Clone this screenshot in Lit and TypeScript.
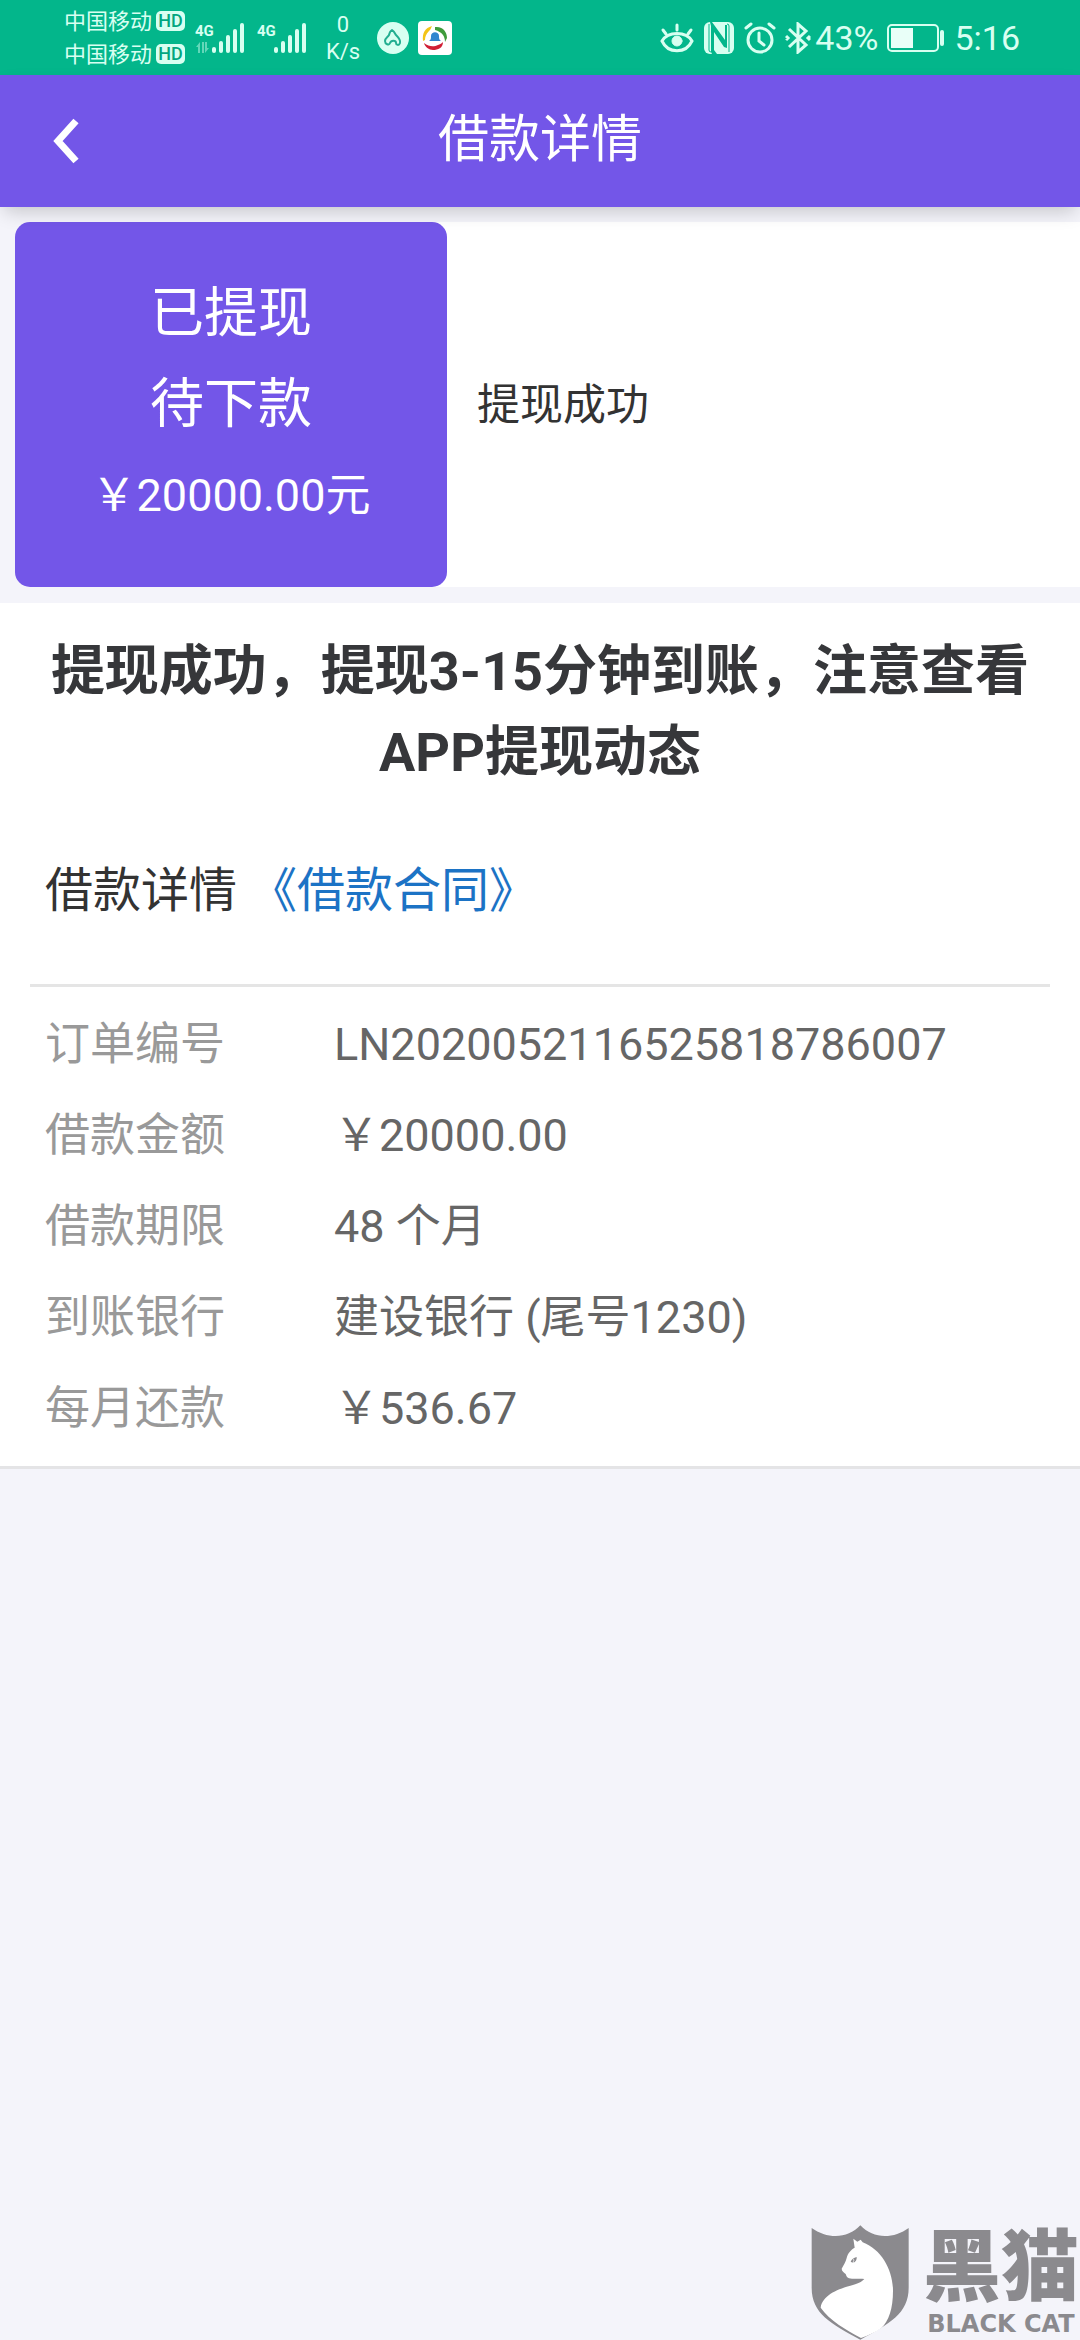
import { LitElement, html, css, svg } from "lit";
import { customElement, property } from "lit/decorators.js";

const FONT = css`Roboto, "Noto Sans CJK SC", sans-serif`;

@customElement("signal-meter")
class SignalMeter extends LitElement {
  @property({ type: Boolean }) traffic = false;

  static styles = css`
    :host { display: block; }
    .meter { display: block; width: 52px; height: 32px; fill: #d8fff1; }
    .net { font: 700 15px ${FONT}; }
    .faint { opacity: 0.45; }
  `;

  render() {
    return html`
      <svg class="meter" viewBox="0 0 52 32" role="img" aria-label="4G 信号">
        <text class="net" x="0" y="14">4G</text>
        ${this.traffic
          ? svg`<g class="faint"><path d="M5 20v11H3v-6H1zM7 20h2v11H7zM10 20h2v6h2l-4 5z"/></g>`
          : ""}
        <rect x="17" y="25" width="4" height="6" rx="2" />
        <rect x="24" y="19" width="4" height="12" rx="2" />
        <rect x="31" y="13" width="4" height="18" rx="2" />
        <rect x="38" y="7" width="4" height="24" rx="2" />
        <rect x="45" y="1" width="4" height="30" rx="2" />
      </svg>
    `;
  }
}

@customElement("status-bar")
class StatusBar extends LitElement {
  static styles = css`
    :host {
      display: flex;
      align-items: center;
      justify-content: space-between;
      height: 75px;
      padding: 0 60px 0 64px;
      background: #03b68b;
      color: #d8fff1;
      font-family: ${FONT};
    }
    .group { display: flex; align-items: center; }
    .left { gap: 10px; }
    .right { gap: 9px; }
    .carriers { display: grid; }
    .carrier { display: flex; align-items: center; gap: 4px; font-size: 22px; line-height: 33px; }
    .hd {
      width: 29px;
      border-radius: 5px;
      background: #d8fff1;
      color: #03a67f;
      font-size: 18px;
      font-weight: 500;
      line-height: 20px;
      text-align: center;
    }
    .speed { width: 48px; font-size: 22px; line-height: 27px; text-align: center; }
    .apps { display: flex; align-items: center; gap: 8px; }
    .big { font-size: 34px; line-height: 40px; }
    .bt { display: flex; align-items: center; gap: 4px; }
    svg { display: block; }
  `;

  render() {
    const carrier = html`<div class="carrier"><span>中国移动</span><span class="hd">HD</span></div>`;
    return html`
      <div class="group left">
        <div class="carriers">${carrier}${carrier}</div>
        <signal-meter traffic></signal-meter>
        <signal-meter></signal-meter>
        <div class="speed"><div>0</div><div>K/s</div></div>
        <div class="apps">
          <svg width="33" height="33" viewBox="0 0 33 33" aria-hidden="true">
            <circle cx="16" cy="17" r="16" fill="#d8fff1" />
            <path d="M15 9c3 2 3 4 4 5 2 2 5 5 4 8-1 3-4 2-4 0 0-3-5-3-6 0-1 3-5 1-5-2s3-4 4-6 0-3 3-5z"
              fill="none" stroke="#22ae90" stroke-width="2" stroke-linejoin="round" />
          </svg>
          <svg width="34" height="34" viewBox="0 0 34 34" aria-hidden="true">
            <rect width="34" height="34" rx="4" fill="#fff" />
            <path d="M5 20C4 12 7 7 14 5c-1 2-1 3-3 5-3 3-4 6-4 9z" fill="#f3c416" />
            <path d="M17 6c8-1 12 5 12 11l-2 4c0-6-3-10-10-12z" fill="#3f9b3b" />
            <path d="M6 22c5 4 10 4 14 2 3-1 4-2 5-3 0 6-5 8-10 8-4 0-8-3-9-7z" fill="#d01f35" />
            <path d="M11 20c2-1 2-3 2-5 0-5 8-5 8 0 0 2 0 4 2 5z" fill="#2f86cf" />
          </svg>
        </div>
      </div>
      <div class="group right">
        <svg width="34" height="32" viewBox="0 0 34 32" fill="none" stroke="#d8fff1" stroke-width="3" stroke-linecap="round" aria-hidden="true">
          <path d="M2 19C8 9 26 9 32 19 26 32 8 32 2 19z" />
          <path d="M3 8l3 4M17 3v5M31 8l-3 4" />
          <circle cx="17" cy="19" r="5" fill="#d8fff1" stroke-width="1" />
        </svg>
        <svg width="32" height="32" viewBox="0 0 32 32" aria-hidden="true">
          <rect x="1" y="0" width="30" height="32" rx="6" fill="#d8fff1" />
          <path d="M6 2v26q0 2 2 2M26 30V4q0-2-2-2" fill="none" stroke="#03b68b" stroke-width="1" />
          <path d="M7 0h2l13 18V3h2v23l-3-1L11 10v18l3 4H9l-1-2V4z" fill="#03b68b" />
        </svg>
        <svg width="32" height="32" viewBox="0 0 32 32" fill="none" stroke="#d8fff1" stroke-width="3" stroke-linecap="round" aria-hidden="true">
          <circle cx="16" cy="18" r="12" />
          <path d="M15 11v8l5 4M2 6l5-4M30 6l-5-4" />
        </svg>
        <div class="bt">
          <svg width="26" height="32" viewBox="0 0 26 32" fill="none" stroke="#d8fff1" stroke-width="3" aria-hidden="true">
            <path d="M4 7l17 16-8 7V2l8 7L4 25" />
            <path d="M1 14l2 2-2 2M25 14l-2 2 2 2" />
          </svg>
          <span class="big">43%</span>
        </div>
        <svg width="58" height="28" viewBox="0 0 58 28" aria-hidden="true">
          <rect x="1" y="1" width="50" height="26" rx="4" fill="none" stroke="#d8fff1" stroke-width="2" />
          <rect x="4" y="4" width="22" height="20" fill="#e9fff8" />
          <rect x="53" y="6" width="4" height="16" rx="2" fill="#d8fff1" />
        </svg>
        <span class="big">5:16</span>
      </div>
    `;
  }
}

@customElement("black-cat-mark")
class BlackCatMark extends LitElement {
  static styles = css`
    :host { display: flex; align-items: flex-start; gap: 14px; color: #8b8a8e; }
    .shield { display: block; width: 98px; height: 115px; }
    .words { display: grid; justify-items: center; }
    .cn { font: 900 78px/86px "Liberation Sans", "Noto Sans CJK SC", sans-serif; }
    .en { font: 700 24px/26px "DejaVu Sans", sans-serif; }
  `;

  render() {
    return html`
      <svg class="shield" viewBox="62 74 294 345" aria-hidden="true">
        <path fill="#8b8a8e" d="M64 83c46 33 108 34 146-8 38 42 100 41 145 8v179c0 78-58 108-145 156C122 370 64 340 64 262z" />
        <path fill="#fff" d="M189 115l12 9 10-6 6 8c58 22 91 85 91 145 0 54-13 91-35 112-17 13-39 22-61 30-44-24-95-53-121-91 5-36 49-55 89-66 22-6 34-11 42-20-15-2-31 1-46-2-7-3-8-8-10-13-5-4-12-9-12-16 7-12 12-20 15-32 3-14 13-25 24-31z" />
        <path fill="#8b8a8e" d="M181 184c3-7 9-11 18-14 1 8-3 14-9 17 0-3 0-6-2-7 0 3 0 5-1 7z" />
        <path fill="#fff" d="M188 178l3-2 1 7z" />
      </svg>
      <div class="words">
        <span class="cn">黑猫</span>
        <span class="en">BLACK CAT</span>
      </div>
    `;
  }
}

@customElement("app-root")
class AppRoot extends LitElement {
  rows: [string, string][] = [
    ["订单编号", "LN2020052116525818786007"],
    ["借款金额", "\uFFE520000.00"],
    ["借款期限", "48 个月"],
    ["到账银行", "建设银行 (尾号1230)"],
    ["每月还款", "\uFFE5536.67"],
  ];

  static styles = css`
    :host {
      display: block;
      position: relative;
      min-height: 100vh;
      background: #f4f4fa;
      color: #333;
      font-family: ${FONT};
    }
    * { box-sizing: border-box; }
    .header {
      position: relative;
      display: grid;
      grid-template-columns: 132px 1fr 132px;
      align-items: center;
      height: 132px;
      background: #7356e8;
      color: #fff;
      box-shadow: 0 8px 18px -4px rgba(0, 0, 0, 0.2);
    }
    .back {
      display: grid;
      place-items: center;
      height: 132px;
      padding: 0;
      border: 0;
      background: none;
      color: inherit;
    }
    .title { margin: 0; padding-bottom: 2px; font-size: 51px; font-weight: 400; line-height: 72px; text-align: center; }
    .progress { display: flex; align-items: center; margin: 15px 0 16px 15px; background: linear-gradient(90deg, #f4f4fa 30px, #fff 30px); }
    .state {
      width: 432px;
      max-width: 50%;
      padding: 46px 0;
      border-radius: 15px;
      background: #7356e8;
      color: #fff;
      font-size: 54px;
      line-height: 91px;
      text-align: center;
    }
    .line { margin: 0; }
    .sum { font-size: 45px; }
    .result { margin: 0 30px; font-size: 43px; line-height: 64px; }
    .detail { padding: 28px 30px 12px; border-bottom: 3px solid #e4e4e6; background: #fff; }
    .notice { margin: 0; color: #36373a; font-size: 54px; font-weight: 700; line-height: 81px; text-align: center; }
    .contract { margin: 0; padding: 62px 15px 57px; border-bottom: 3px solid #e5e5e5; font-size: 48px; line-height: 72px; }
    .link { color: #1c73c5; text-decoration: none; }
    .facts { display: grid; grid-template-columns: 289px 1fr; margin: 0; padding: 12px 15px 0; font-size: 45px; line-height: 91px; }
    .name { color: #999; }
    .value { margin: 0; color: #666; }
    .mark { position: absolute; right: 1px; bottom: 0; }
  `;

  render() {
    return html`
      <status-bar></status-bar>
      <header class="header">
        <button class="back" aria-label="返回">
          <svg width="26" height="46" viewBox="0 0 26 46" fill="none" stroke="#fff" stroke-width="7" aria-hidden="true">
            <path d="M23 3L5 23l18 20" />
          </svg>
        </button>
        <h1 class="title">借款详情</h1>
      </header>
      <main>
        <section class="progress">
          <div class="state">
            <p class="line">已提现</p>
            <p class="line">待下款</p>
            <p class="line sum">\uFFE520000.00元</p>
          </div>
          <p class="result">提现成功</p>
        </section>
        <section class="detail">
          <h2 class="notice">提现成功，提现3-15分钟到账，注意查看APP提现动态</h2>
          <p class="contract">借款详情 <a class="link" href="#contract">《借款合同》</a></p>
          <dl class="facts">
            ${this.rows.map(([name, value]) => html`<dt class="name">${name}</dt><dd class="value">${value}</dd>`)}
          </dl>
        </section>
      </main>
      <black-cat-mark class="mark"></black-cat-mark>
    `;
  }
}
